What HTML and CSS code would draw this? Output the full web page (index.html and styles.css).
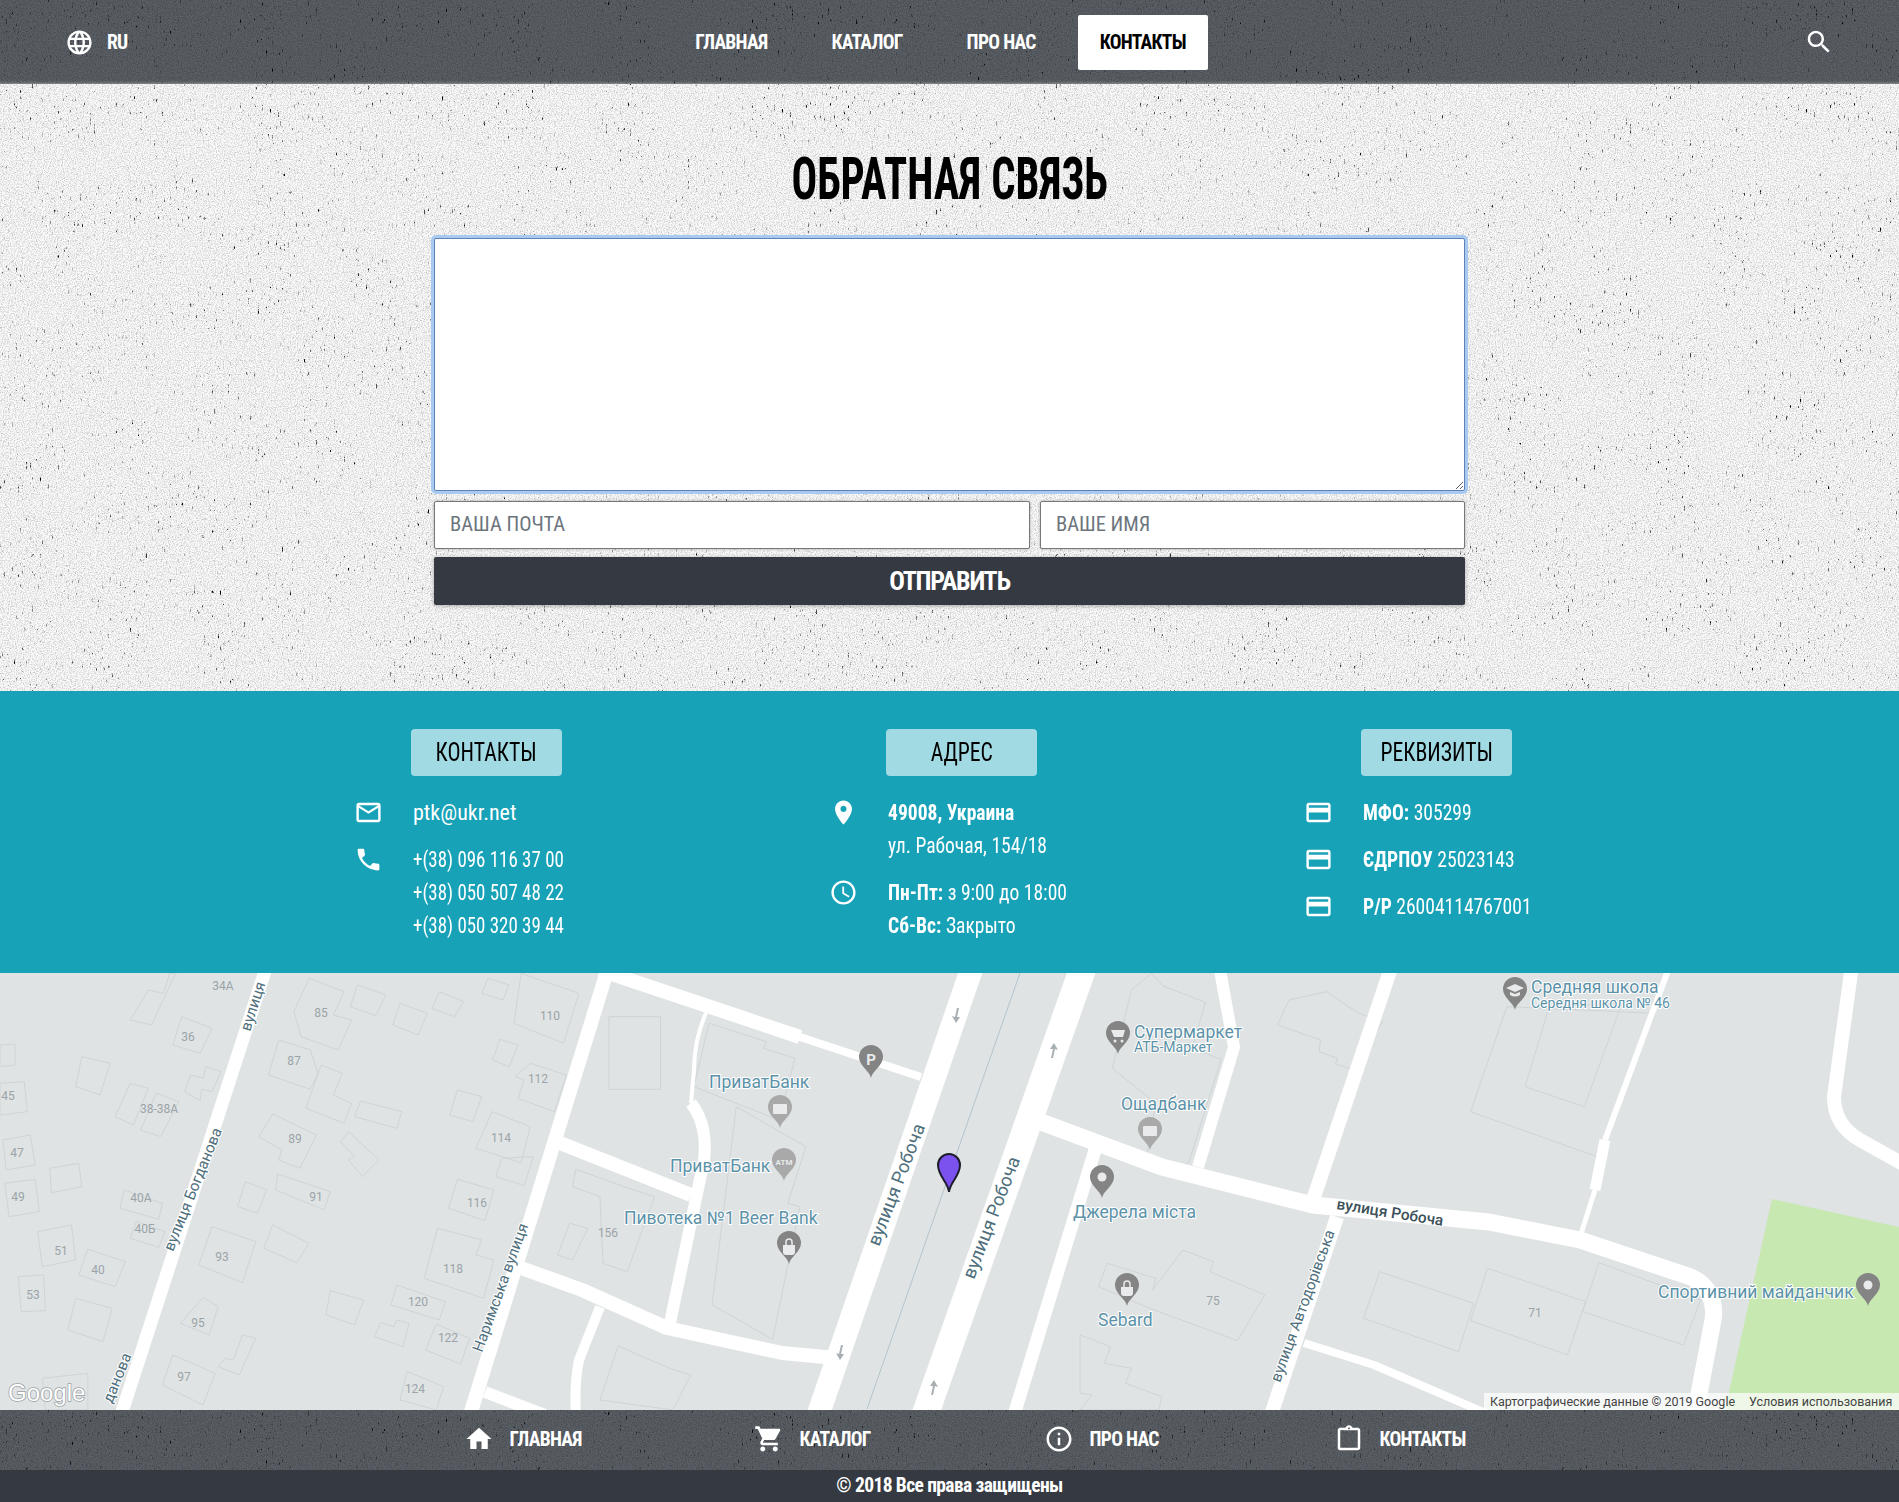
FILE: index.html
```html
<!DOCTYPE html>
<html lang="ru">
<head>
  <meta charset="UTF-8">
  <title>Контакты</title>
  <link rel="stylesheet" href="styles.css">
</head>
<body>
  <svg class="icon-defs" width="0" height="0">
    <symbol id="i-language" viewBox="0 0 24 24"><path d="M11.99 2C6.47 2 2 6.48 2 12s4.47 10 9.99 10C17.52 22 22 17.52 22 12S17.52 2 11.99 2zm6.93 6h-2.95c-.32-1.25-.78-2.45-1.38-3.56 1.84.63 3.37 1.91 4.33 3.56zM12 4.04c.83 1.2 1.48 2.53 1.91 3.96h-3.82c.43-1.43 1.08-2.76 1.91-3.96zM4.26 14C4.1 13.36 4 12.69 4 12s.1-1.36.26-2h3.38c-.08.66-.14 1.32-.14 2 0 .68.06 1.34.14 2H4.26zm.82 2h2.95c.32 1.25.78 2.45 1.38 3.56-1.84-.63-3.37-1.9-4.33-3.56zm2.95-8H5.08c.96-1.66 2.49-2.93 4.33-3.56C8.81 5.55 8.35 6.75 8.03 8zM12 19.96c-.83-1.2-1.48-2.53-1.91-3.96h3.82c-.43 1.43-1.08 2.76-1.91 3.96zM14.34 14H9.66c-.09-.66-.16-1.32-.16-2 0-.68.07-1.35.16-2h4.68c.09.65.16 1.32.16 2 0 .68-.07 1.34-.16 2zm.25 5.56c.6-1.11 1.06-2.31 1.38-3.56h2.95c-.96 1.65-2.49 2.93-4.33 3.56zM16.36 14c.08-.66.14-1.32.14-2 0-.68-.06-1.34-.14-2h3.38c.16.64.26 1.31.26 2s-.1 1.36-.26 2h-3.38z"/></symbol>
    <symbol id="i-search" viewBox="0 0 24 24"><path d="M15.5 14h-.79l-.28-.27C15.41 12.59 16 11.11 16 9.5 16 5.91 13.09 3 9.5 3S3 5.91 3 9.5 5.91 16 9.5 16c1.61 0 3.09-.59 4.23-1.57l.27.28v.79l5 4.99L20.49 19l-4.99-5zm-6 0C7.01 14 5 11.99 5 9.5S7.01 5 9.5 5 14 7.01 14 9.5 11.99 14 9.5 14z"/></symbol>
    <symbol id="i-mail" viewBox="0 0 24 24"><path d="M20 4H4c-1.1 0-1.99.9-1.99 2L2 18c0 1.1.9 2 2 2h16c1.1 0 2-.9 2-2V6c0-1.1-.9-2-2-2zm0 14H4V8l8 5 8-5v10zm-8-7L4 6h16l-8 5z"/></symbol>
    <symbol id="i-phone" viewBox="0 0 24 24"><path d="M6.62 10.79c1.44 2.83 3.76 5.14 6.59 6.59l2.2-2.2c.27-.27.67-.36 1.02-.24 1.12.37 2.33.57 3.57.57.55 0 1 .45 1 1V20c0 .55-.45 1-1 1-9.39 0-17-7.61-17-17 0-.55.45-1 1-1h3.5c.55 0 1 .45 1 1 0 1.25.2 2.45.57 3.57.11.35.03.74-.25 1.02l-2.2 2.2z"/></symbol>
    <symbol id="i-place" viewBox="0 0 24 24"><path d="M12 2C8.13 2 5 5.13 5 9c0 5.25 7 13 7 13s7-7.75 7-13c0-3.87-3.13-7-7-7zm0 9.5c-1.38 0-2.5-1.12-2.5-2.5s1.12-2.5 2.5-2.5 2.5 1.12 2.5 2.5-1.12 2.5-2.5 2.5z"/></symbol>
    <symbol id="i-time" viewBox="0 0 24 24"><path d="M11.99 2C6.47 2 2 6.48 2 12s4.47 10 9.99 10C17.52 22 22 17.52 22 12S17.52 2 11.99 2zM12 20c-4.42 0-8-3.58-8-8s3.58-8 8-8 8 3.58 8 8-3.58 8-8 8z"/><path d="M12.5 7H11v6l5.25 3.15.75-1.23-4.5-2.67z"/></symbol>
    <symbol id="i-card" viewBox="0 0 24 24"><path d="M20 4H4c-1.11 0-1.99.89-1.99 2L2 18c0 1.11.89 2 2 2h16c1.11 0 2-.89 2-2V6c0-1.11-.89-2-2-2zm0 14H4v-6h16v6zm0-10H4V6h16v2z"/></symbol>
    <symbol id="i-home" viewBox="0 0 24 24"><path d="M10 20v-6h4v6h5v-8h3L12 3 2 12h3v8z"/></symbol>
    <symbol id="i-cart" viewBox="0 0 24 24"><path d="M7 18c-1.1 0-1.99.9-1.99 2S5.9 22 7 22s2-.9 2-2-.9-2-2-2zM1 2v2h2l3.6 7.59-1.35 2.45c-.16.28-.25.61-.25.96 0 1.1.9 2 2 2h12v-2H7.42c-.14 0-.25-.11-.25-.25l.03-.12.9-1.83h7.45c.75 0 1.41-.41 1.75-1.03l3.58-6.49c.08-.14.12-.31.12-.48 0-.55-.45-1-1-1H5.21l-.94-2H1zm16 16c-1.1 0-1.99.9-1.99 2s.89 2 1.99 2 2-.9 2-2-.9-2-2-2z"/></symbol>
    <symbol id="i-info" viewBox="0 0 24 24"><path d="M11 17h2v-6h-2v6zm1-15C6.48 2 2 6.48 2 12s4.48 10 10 10 10-4.48 10-10S17.52 2 12 2zm0 18c-4.41 0-8-3.59-8-8s3.59-8 8-8 8 3.59 8 8-3.59 8-8 8zM11 9h2V7h-2v2z"/></symbol>
    <symbol id="i-clip" viewBox="0 0 24 24"><path d="M19 3h-4.18C14.4 1.84 13.3 1 12 1c-1.3 0-2.4.84-2.82 2H5c-.14 0-.27.01-.4.04-.39.08-.74.28-1.01.55-.18.18-.33.4-.43.64-.1.23-.16.49-.16.77v14c0 .27.06.54.16.78s.25.45.43.64c.27.27.62.47 1.01.55.13.02.26.03.4.03h14c1.1 0 2-.9 2-2V5c0-1.1-.9-2-2-2zm0 16H5V5h14v14zM12 2.75c.41 0 .75.34.75.75s-.34.75-.75.75-.75-.34-.75-.75.34-.75.75-.75z"/></symbol>
    <symbol id="map-pin" viewBox="0 0 24 33" overflow="visible"><path d="M12 33C11 26 0 21 0 12a12 12 0 0 1 24 0c0 9-11 14-12 21z"/></symbol>
  </svg>

  <!--NAVIGATION BAR-->
  <header class="topbar">
    <div class="lang">
      <svg class="icon"><use href="#i-language"/></svg>
      <span>RU</span>
    </div>
    <nav class="topnav">
      <a href="#">ГЛАВНАЯ</a>
      <a href="#">КАТАЛОГ</a>
      <a href="#">ПРО НАС</a>
      <a href="#" class="active">КОНТАКТЫ</a>
    </nav>
    <div class="search">
      <svg class="icon"><use href="#i-search"/></svg>
    </div>
  </header>

  <!--FEEDBACK FORM-->
  <main class="feedback">
    <h1><span>ОБРАТНАЯ СВЯЗЬ</span></h1>
    <form class="feedback-form">
      <textarea></textarea>
      <div class="form-row">
        <input type="text" class="input-mail" placeholder="ВАША ПОЧТА">
        <input type="text" class="input-name" placeholder="ВАШЕ ИМЯ">
      </div>
      <button type="button">ОТПРАВИТЬ</button>
    </form>
  </main>

  <!--CONTACT INFO-->
  <section class="info">
    <div class="info-col">
      <h3><span>КОНТАКТЫ</span></h3>
      <div class="info-row">
        <svg class="icon"><use href="#i-mail"/></svg>
        <div class="info-text info-mail">ptk@ukr.net</div>
      </div>
      <div class="info-row">
        <svg class="icon"><use href="#i-phone"/></svg>
        <div class="info-text info-phones">+(38) 096 116 37 00<br>+(38) 050 507 48 22<br>+(38) 050 320 39 44</div>
      </div>
    </div>
    <div class="info-col">
      <h3><span>АДРЕС</span></h3>
      <div class="info-row">
        <svg class="icon"><use href="#i-place"/></svg>
        <div class="info-text"><strong>49008, Украина</strong><br>ул. Рабочая, 154/18</div>
      </div>
      <div class="info-row">
        <svg class="icon"><use href="#i-time"/></svg>
        <div class="info-text"><strong>Пн-Пт:</strong> з 9:00 до 18:00<br><strong>Сб-Вс:</strong> Закрыто</div>
      </div>
    </div>
    <div class="info-col">
      <h3><span>РЕКВИЗИТЫ</span></h3>
      <div class="info-row">
        <svg class="icon"><use href="#i-card"/></svg>
        <div class="info-text"><strong>МФО:</strong> 305299</div>
      </div>
      <div class="info-row">
        <svg class="icon"><use href="#i-card"/></svg>
        <div class="info-text"><strong>ЄДРПОУ</strong> 25023143</div>
      </div>
      <div class="info-row">
        <svg class="icon"><use href="#i-card"/></svg>
        <div class="info-text"><strong>Р/Р</strong> 26004114767001</div>
      </div>
    </div>
  </section>

  <!--MAP-->
  <div class="map">
    <svg viewBox="0 973 1899 437" width="1899" height="437">
      <polygon class="park" points="1772,1199 1899,1227 1899,1410 1870,1410 1725,1410"/>

      <!-- buildings, traced in the crop's coordinates -->
      <g class="buildings" transform="translate(0 970) scale(.606 .3333)">
        <polygon points="280,10 270,70 245,60 215,150 250,165 290,10"/>
        <polygon points="300,140 350,175 330,250 285,225"/>
        <polygon points="135,260 182,280 165,375 125,350"/>
        <polygon points="0,225 25,222 25,285 0,290"/>
        <polygon points="0,340 40,335 45,425 0,435"/>
        <polygon points="215,340 245,355 220,465 190,440"/>
        <polygon points="258,370 295,395 265,500 232,480"/>
        <polygon points="340,290 365,305 350,365 333,358 330,392 305,365 315,315 335,325"/>
        <polygon points="510,25 568,65 550,135 580,150 558,240 497,200 485,125"/>
        <polygon points="590,45 637,75 620,137 578,110"/>
        <polygon points="660,100 705,130 690,195 648,165"/>
        <polygon points="725,65 765,95 750,140 713,115"/>
        <polygon points="805,25 840,45 830,90 795,70"/>
        <polygon points="860,10 955,70 930,220 848,160"/>
        <polygon points="825,208 855,225 840,290 813,270"/>
        <polygon points="875,280 935,315 915,425 855,385 865,330 850,320"/>
        <polygon points="460,210 512,240 525,310 512,358 443,315"/>
        <polygon points="530,285 565,310 550,375 580,400 568,460 505,415"/>
        <polygon points="595,393 663,425 655,475 585,440"/>
        <polygon points="450,432 522,495 495,595 460,570 465,540 427,500"/>
        <polygon points="575,485 625,570 598,620 575,570 585,560 562,515"/>
        <polygon points="755,360 795,380 780,455 742,435"/>
        <polygon points="812,425 875,470 860,578 785,535"/>
        <polygon points="828,565 880,560 865,647 818,620"/>
        <polygon points="755,628 815,660 800,752 740,715"/>
        <polygon points="458,612 545,665 535,720 455,660"/>
        <polygon points="405,635 440,660 425,730 392,710"/>
        <polygon points="450,765 510,820 490,878 435,835"/>
        <polygon points="5,510 50,495 58,585 10,600"/>
        <polygon points="82,595 130,580 135,650 85,668"/>
        <polygon points="8,640 58,628 65,725 15,740"/>
        <polygon points="205,660 268,700 262,748 198,715"/>
        <polygon points="225,755 272,785 262,832 215,805"/>
        <polygon points="62,785 118,765 125,870 70,890"/>
        <polygon points="145,838 207,875 190,950 130,915"/>
        <polygon points="30,920 72,915 75,1022 35,1025"/>
        <polygon points="125,985 185,1015 170,1115 112,1080"/>
        <polygon points="350,770 422,815 400,938 328,885"/>
        <polygon points="722,775 795,810 785,855 815,870 798,985 700,925"/>
        <polygon points="545,962 600,990 585,1065 538,1035"/>
        <polygon points="655,945 735,995 725,1050 645,1005"/>
        <polygon points="655,1050 675,1060 665,1130 618,1100 628,1058 650,1070"/>
        <polygon points="720,1063 775,1105 760,1182 702,1140"/>
        <polygon points="335,982 360,1010 345,1095 298,1060"/>
        <polygon points="400,1095 422,1105 395,1215 360,1190 372,1165 385,1170"/>
        <polygon points="285,1155 355,1210 335,1305 268,1245"/>
        <polygon points="70,1225 145,1210 145,1320 75,1320"/>
        <polygon points="672,1205 732,1250 720,1320 660,1290"/>
        <polygon points="1005,140 1090,140 1090,358 1005,358"/>
        <polygon points="1170,160 1265,215 1260,235 1312,265 1285,450 1145,350"/>
        <polygon points="1215,410 1330,530 1300,700 1320,710 1275,1108 1175,1005"/>
        <polygon points="950,598 1030,650 1080,680 1035,905 995,880 990,680 945,650"/>
        <polygon points="940,760 970,775 945,870 920,855"/>
        <polygon points="1020,1128 1105,1195 1140,1215 1110,1320 990,1290"/>
      </g>
      <g class="buildings" transform="translate(950 970) scale(.6053 .3333)">
        <polygon points="333,10 352,48 422,97 400,235 448,268 395,575 378,595 325,555 340,400 268,295 300,60"/>
        <polygon points="541,165 560,90 622,65 675,130 715,155 690,225 668,300 637,282 640,265 610,245 612,210"/>
        <polygon points="920,110 860,425 1072,562 1165,130"/>
        <polygon points="990,110 950,350 1048,410 1110,100"/>
        <polygon points="260,880 340,925 335,960 385,840 435,875 430,905 520,975 475,1112 330,1015 245,950"/>
        <polygon points="215,1095 265,1130 255,1180 300,1195 290,1240 350,1280 345,1320 215,1320 235,1275 215,1270"/>
        <polygon points="710,905 865,1000 840,1145 683,1045"/>
        <polygon points="888,895 1050,995 1020,1155 860,1052"/>
        <polygon points="1072,878 1240,990 1212,1125 1045,1025"/>
      </g>

      <!-- roads -->
      <g class="roads">
        <path stroke-width="13" d="M267 965 L121 1415"/>
        <path stroke-width="14" d="M609 965 L470 1415"/>
        <path stroke-width="14" d="M600 970 L800 1037"/>
        <path stroke-width="8" d="M800 1037 L921 1077"/>
        <path stroke-width="4" d="M706 1013 Q694 1040 694 1070 L691 1103"/>
        <path stroke-width="12" d="M691 1103 Q708 1125 704 1160 L670 1323"/>
        <path stroke-width="14" d="M560 1143 L691 1195"/>
        <path stroke-width="14" d="M521 1268 L582 1290 L667 1328 L782 1353 L836 1358"/>
        <path stroke-width="10" d="M600 1307 L579 1360 Q574 1385 576 1415"/>
        <path stroke-width="12" d="M485 1392 L545 1415"/>
        <path stroke-width="23" d="M973 965 L818 1415"/>
        <path stroke-width="27" d="M1084 965 L925 1415"/>
        <path stroke-width="1" class="median" d="M1020 973 L867 1409"/>
        <path stroke-width="17" d="M1041 1122 L1162 1167 L1313 1205 L1489 1222 L1580 1240 L1691 1277 Q1717 1290 1713 1320 L1695 1415"/>
        <path stroke-width="13" d="M1095 1150 L1014 1415"/>
        <path stroke-width="12" d="M1219 965 L1234 1047 L1198 1167"/>
        <path stroke-width="14" d="M1392 965 L1313 1200"/>
        <path stroke-width="6" d="M1670 965 L1605 1140"/>
        <path stroke-width="11" d="M1605 1140 L1595 1190"/>
        <path stroke-width="5" d="M1595 1190 L1580 1237"/>
        <path stroke-width="14" d="M1337 1217 L1271 1415"/>
        <path stroke-width="8" d="M1304 1343 L1374 1365 L1490 1415"/>
        <path stroke-width="14" d="M1852 965 L1834 1097 Q1834 1125 1860 1140 L1905 1165"/>
      </g>
      <g class="road-arrows">
        <path d="M957 1008 l-2 9 -3 -1 4 7 4 -6 -3 0 2 -9z"/>
        <path d="M841 1345 l-2 9 -3 -1 4 7 4 -6 -3 0 2 -9z"/>
        <path d="M933 1395 l2 -9 3 1 -4 -7 -4 6 3 0 -2 9z"/>
        <path d="M1053 1058 l2 -9 3 1 -4 -7 -4 6 3 0 -2 9z"/>
      </g>

      <!-- house numbers -->
      <g class="house-nums">
        <text x="223" y="990">34А</text><text x="321" y="1017">85</text><text x="550" y="1020">110</text>
        <text x="188" y="1041">36</text><text x="294" y="1065">87</text><text x="538" y="1083">112</text>
        <text x="159" y="1113">38-38А</text><text x="8" y="1100">45</text><text x="501" y="1142">114</text>
        <text x="295" y="1143">89</text><text x="17" y="1157">47</text><text x="316" y="1201">91</text>
        <text x="18" y="1201">49</text><text x="141" y="1202">40А</text><text x="477" y="1207">116</text>
        <text x="145" y="1233">40Б</text><text x="608" y="1237">156</text><text x="61" y="1255">51</text>
        <text x="222" y="1261">93</text><text x="98" y="1274">40</text><text x="453" y="1273">118</text>
        <text x="33" y="1299">53</text><text x="418" y="1306">120</text><text x="198" y="1327">95</text>
        <text x="448" y="1342">122</text><text x="184" y="1381">97</text><text x="415" y="1393">124</text>
        <text x="1213" y="1305">75</text><text x="1535" y="1317">71</text>
      </g>

      <!-- street names -->
      <g class="street">
        <text class="street-wide" transform="translate(879 1247) rotate(-69)">вулиця Робоча</text>
        <text class="street-wide" transform="translate(974 1280) rotate(-69)">вулиця Робоча</text>
        <text transform="translate(173 1252) rotate(-68)">вулиця Богданова</text>
        <text transform="translate(112 1404) rotate(-68)">данова</text>
        <text transform="translate(250 1032) rotate(-72)">вулиця</text>
        <text transform="translate(482 1353) rotate(-70)">Наримська вулиця</text>
        <text transform="translate(1280 1383) rotate(-70)">вулиця Автодорівська</text>
        <text class="street-main" transform="translate(1336 1209) rotate(9)">вулиця Робоча</text>
      </g>

      <!-- places -->
      <use href="#map-pin" class="pin" x="859" y="1045" width="24" height="33"/>
      <use href="#map-pin" class="pin pin-light" x="768" y="1095" width="24" height="33"/>
      <use href="#map-pin" class="pin pin-light" x="772" y="1148" width="24" height="33"/>
      <use href="#map-pin" class="pin" x="777" y="1231" width="24" height="33"/>
      <use href="#map-pin" class="pin" x="1106" y="1021" width="24" height="33"/>
      <use href="#map-pin" class="pin pin-light" x="1138" y="1117" width="24" height="33"/>
      <use href="#map-pin" class="pin" x="1503" y="977" width="24" height="33"/>
      <use href="#map-pin" class="pin" x="1090" y="1165" width="24" height="33"/>
      <use href="#map-pin" class="pin" x="1115" y="1273" width="24" height="33"/>
      <use href="#map-pin" class="pin" x="1856" y="1273" width="24" height="33"/>

      <g class="pin-marks">
        <text x="871" y="1065">P</text>
        <rect x="773" y="1104" width="14" height="10" rx="1"/>
        <text class="mark-small" x="784" y="1165">ATM</text>
        <path d="M783 1245h12v7a3 3 0 0 1-3 3h-6a3 3 0 0 1-3-3z"/>
        <path class="mark-line" d="M786 1245v-3a3 3 0 0 1 6 0v3"/>
        <path d="M1111 1030h14l-2 7h-9z"/>
        <circle cx="1115" cy="1041" r="1.5"/><circle cx="1122" cy="1041" r="1.5"/>
        <rect x="1143" y="1126" width="14" height="10" rx="1"/>
        <path d="M1515 984l9 4-9 4-9-4z"/>
        <path d="M1510 992v3q5 3 10 0v-3l-5 2z"/>
        <circle cx="1102" cy="1177" r="4.5"/>
        <path d="M1121 1287h12v6a3 3 0 0 1-3 3h-6a3 3 0 0 1-3-3z"/>
        <path class="mark-line" d="M1124 1287v-3a3 3 0 0 1 6 0v3"/>
        <circle cx="1868" cy="1285" r="4.5"/>
      </g>

      <g class="poi">
        <text x="709" y="1088">ПриватБанк</text>
        <text x="670" y="1172">ПриватБанк</text>
        <text x="624" y="1224">Пивотека №1 Beer Bank</text>
        <text x="1134" y="1038">Супермаркет</text>
        <text class="poi-small" x="1134" y="1052">АТБ-Маркет</text>
        <text x="1121" y="1110">Ощадбанк</text>
        <text x="1073" y="1218">Джерела міста</text>
        <text x="1098" y="1326">Sebard</text>
        <text x="1658" y="1298">Спортивний майданчик</text>
        <text x="1531" y="993">Средняя школа</text>
        <text class="poi-small" x="1531" y="1008">Середня школа № 46</text>
      </g>

      <text class="google" x="8" y="1401">Google</text>
      <rect class="attr-bg" x="1484" y="1393" width="415" height="17"/>
      <text class="attr" x="1490" y="1406">Картографические данные © 2019 Google</text>
      <text class="attr" x="1749" y="1406">Условия использования</text>

      <path class="marker" d="M949 1192C948 1182 938 1176 938 1165a11 11 0 0 1 22 0C960 1176 950 1182 949 1192z"/>
    </svg>
  </div>

  <!--FOOTER-->
  <nav class="footnav">
    <a href="#"><svg class="icon"><use href="#i-home"/></svg>ГЛАВНАЯ</a>
    <a href="#"><svg class="icon"><use href="#i-cart"/></svg>КАТАЛОГ</a>
    <a href="#"><svg class="icon"><use href="#i-info"/></svg>ПРО НАС</a>
    <a href="#"><svg class="icon"><use href="#i-clip"/></svg>КОНТАКТЫ</a>
  </nav>
  <footer class="copyright">© 2018 Все права защищены</footer>
</body>
</html>
```

FILE: styles.css
```css
* {
  margin: 0;
  padding: 0;
  box-sizing: border-box;
}

body {
  font-family: "Liberation Sans Narrow", "Roboto Condensed", "Liberation Sans", sans-serif;
  background-color: #fff;
  color: #fff;
}

a {
  color: inherit;
  text-decoration: none;
}

.icon {
  fill: currentColor;
  flex: none;
}

.icon-defs {
  position: absolute;
}

/* dark scratched bars */
.topbar,
.footnav {
  background-color: #5c6167;
  background-image: url("data:image/svg+xml,%3Csvg xmlns='http://www.w3.org/2000/svg' width='1899' height='90'%3E%3Cfilter id='a' x='0' y='0' width='100%25' height='100%25'%3E%3CfeTurbulence type='fractalNoise' baseFrequency='.8' numOctaves='2' seed='4'/%3E%3CfeColorMatrix values='0 0 0 0 0 0 0 0 0 0 0 0 0 0 0 .5 0 0 0 -.17'/%3E%3C/filter%3E%3Cfilter id='b' x='0' y='0' width='100%25' height='100%25'%3E%3CfeTurbulence type='fractalNoise' baseFrequency='.5 .16' numOctaves='3' seed='9'/%3E%3CfeColorMatrix values='0 0 0 0 0 0 0 0 0 0 0 0 0 0 0 7 0 0 0 -4.9' result='f'/%3E%3CfeTurbulence type='fractalNoise' baseFrequency='.02' numOctaves='3' seed='5'/%3E%3CfeColorMatrix values='0 0 0 0 0 0 0 0 0 0 0 0 0 0 0 3 0 0 0 -1'/%3E%3CfeComposite in='f' operator='in'/%3E%3C/filter%3E%3Crect width='1899' height='90' filter='url(%23a)'/%3E%3Crect width='1899' height='90' filter='url(%23b)'/%3E%3C/svg%3E");
}

/* NAVIGATION BAR */
.topbar {
  height: 84px;
  display: grid;
  grid-template-columns: 1fr auto 1fr;
  align-items: center;
  padding: 0 65px;
  font-size: 19.5px;
  font-weight: 700;
  letter-spacing: -.7px;
  box-shadow: inset 0 -3px 3px -2px rgba(255, 255, 255, .35);
}

.lang {
  display: flex;
  align-items: center;
  gap: 13px;
}

.lang .icon {
  width: 29px;
  height: 29px;
}

.topnav {
  display: flex;
  align-items: center;
  gap: 20px;
  margin-right: 18px;
}

.topnav a {
  height: 55px;
  line-height: 55px;
  padding: 0 22px;
  border-radius: 2px;
}

.topnav .active {
  background-color: #fff;
  color: #000;
}

.search {
  display: flex;
  justify-content: flex-end;
}

.search .icon {
  width: 30px;
  height: 30px;
}

/* FEEDBACK FORM */
.feedback {
  height: 607px;
  padding-top: 64px;
  background-color: #fbfbfb;
  background-image: url("data:image/svg+xml,%3Csvg xmlns='http://www.w3.org/2000/svg' width='1899' height='610'%3E%3Cfilter id='a' x='0' y='0' width='100%25' height='100%25'%3E%3CfeTurbulence type='fractalNoise' baseFrequency='.85' numOctaves='2' seed='3'/%3E%3CfeColorMatrix values='0 0 0 0 0 0 0 0 0 0 0 0 0 0 0 .5 0 0 0 -.2'/%3E%3C/filter%3E%3Cfilter id='b' x='0' y='0' width='100%25' height='100%25'%3E%3CfeTurbulence type='fractalNoise' baseFrequency='.5 .16' numOctaves='3' seed='7'/%3E%3CfeColorMatrix values='0 0 0 0 0 0 0 0 0 0 0 0 0 0 0 7 0 0 0 -4.9' result='f'/%3E%3CfeTurbulence type='fractalNoise' baseFrequency='.02' numOctaves='3' seed='5'/%3E%3CfeColorMatrix values='0 0 0 0 0 0 0 0 0 0 0 0 0 0 0 3 0 0 0 -1'/%3E%3CfeComposite in='f' operator='in'/%3E%3C/filter%3E%3Crect width='1899' height='610' filter='url(%23a)'/%3E%3Crect width='1899' height='610' filter='url(%23b)'/%3E%3C/svg%3E");
}

.feedback h1 {
  color: #000;
  font-size: 60px;
  line-height: 62px;
  font-weight: 700;
  text-align: center;
  margin-bottom: 28px;
}

.feedback h1 span {
  display: inline-block;
  transform: scaleX(.71);
}

.feedback-form {
  width: 1031px;
  margin: 0 auto;
  display: flex;
  flex-direction: column;
}

.feedback-form textarea {
  height: 253px;
  border: 1px solid #5f83b5;
  border-radius: 2px;
  box-shadow: 0 0 0 3px #a9caf0;
  background: #fff;
  resize: vertical;
  outline: none;
}

.form-row {
  display: flex;
  gap: 10px;
  margin-top: 10px;
}

.form-row input {
  height: 48px;
  padding: 0 15px 2px;
  border: 1px solid #777;
  border-radius: 2px;
  font-family: inherit;
  font-size: 20.5px;
  box-shadow: 0 0 3px rgba(0, 0, 0, .3);
}

.form-row input::placeholder {
  color: #6c757d;
}

.input-mail {
  width: 596px;
}

.input-name {
  flex: 1;
}

.feedback-form button {
  height: 48px;
  margin-top: 8px;
  border: none;
  border-radius: 2px;
  background-color: #353a42;
  color: #fff;
  font-family: inherit;
  font-size: 26px;
  font-weight: 700;
  letter-spacing: -1.2px;
  box-shadow: 0 1px 4px rgba(0, 0, 0, .3);
}

/* CONTACT INFO */
.info {
  height: 282px;
  padding: 38px 237px 0;
  display: grid;
  grid-template-columns: repeat(3, 1fr);
  background-color: #17a2b8;
  font-size: 22px;
  line-height: 33px;
}

.info h3 {
  width: 151px;
  height: 47px;
  margin: 0 0 20px 174px;
  border-radius: 4px;
  background-color: #a2dae4;
  color: #000;
  font-size: 25px;
  line-height: 47px;
  font-weight: 400;
  text-align: center;
}

.info h3 span {
  display: inline-block;
  transform: scaleX(.87);
}

.info-row {
  display: flex;
  align-items: flex-start;
  gap: 30px;
  padding-left: 117px;
  margin-bottom: 14px;
}

.info-row .icon {
  width: 29px;
  height: 29px;
  margin-top: 2px;
}

.info-text {
  transform: scaleX(.89);
  transform-origin: left;
  white-space: nowrap;
}

.info-text.info-phones {
  transform: scaleX(.86);
}

.info-text.info-mail {
  transform: none;
}

/* MAP */
.map {
  height: 437px;
  overflow: hidden;
  background-color: #dfe3e4;
}

.map svg {
  display: block;
  font-family: Roboto, "Liberation Sans", sans-serif;
}

.park {
  fill: #c8e8b2;
}

.buildings polygon {
  fill: none;
  stroke: #cfd4d6;
  stroke-width: 1;
  vector-effect: non-scaling-stroke;
}

.roads path {
  fill: none;
  stroke: #fff;
  stroke-linejoin: round;
}

.roads .median {
  stroke: #b4c4cc;
}

.road-arrows path {
  fill: #a8afb2;
}

.house-nums text {
  fill: #9ba4a8;
  font-size: 12px;
  text-anchor: middle;
}

.street text {
  fill: #4f6f7d;
  font-size: 15.3px;
  paint-order: stroke;
  stroke: #fff;
  stroke-width: 2px;
}

.street .street-wide {
  font-size: 18.5px;
}

.street .street-main {
  fill: #3b5058;
  font-size: 15.4px;
  font-weight: 500;
}

.pin {
  fill: #848484;
}

.pin-light {
  fill: #a9a9a9;
}

.pin-marks {
  fill: #e8eaeb;
}

.pin-marks text {
  font-size: 15px;
  font-weight: 700;
  text-anchor: middle;
}

.pin-marks .mark-small {
  font-size: 8px;
}

.pin-marks .mark-line {
  fill: none;
  stroke: #e8eaeb;
  stroke-width: 1.5;
}

.poi text {
  fill: #5b92a8;
  font-size: 17.5px;
  paint-order: stroke;
  stroke: #fff;
  stroke-width: 2px;
}

.poi .poi-small {
  font-size: 14px;
}

.google {
  fill: #fff;
  font-size: 24px;
  font-family: "Liberation Sans", sans-serif;
  paint-order: stroke;
  stroke: #9aa0a3;
  stroke-width: 1.5px;
}

.attr-bg {
  fill: rgba(255, 255, 255, .7);
}

.attr {
  fill: #444;
  font-size: 12.5px;
}

.marker {
  fill: #7b52ee;
  stroke: #1d1d2b;
  stroke-width: 2;
}

/* FOOTER */
.footnav {
  height: 60px;
  padding-bottom: 2px;
  display: grid;
  grid-template-columns: repeat(4, 290px);
  justify-content: center;
  align-items: center;
  font-size: 19.5px;
  font-weight: 700;
  letter-spacing: -.7px;
}

.footnav a {
  display: flex;
  align-items: center;
  gap: 16px;
  padding-left: 94px;
}

.footnav .icon {
  width: 30px;
  height: 30px;
}

.copyright {
  height: 32px;
  background-color: #353a42;
  font-size: 19.5px;
  letter-spacing: -.6px;
  font-weight: 700;
  line-height: 32px;
  text-align: center;
}
```
